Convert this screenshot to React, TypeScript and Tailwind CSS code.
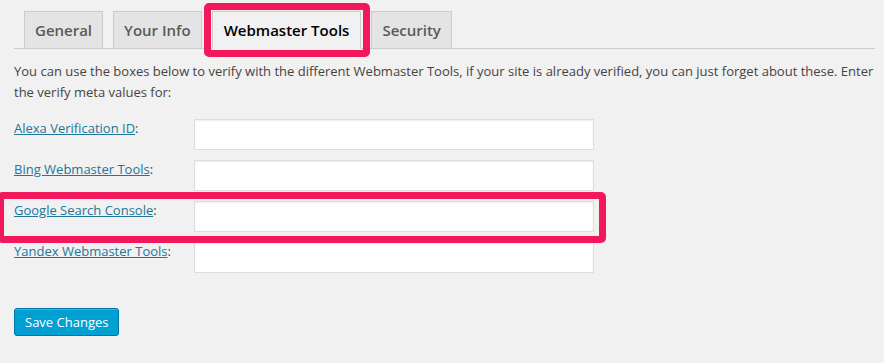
import React from 'react';

const tabs = [
  { label: 'General', active: false },
  { label: 'Your Info', active: false },
  { label: 'Webmaster Tools', active: true },
  { label: 'Security', active: false },
];

const fields = [
  'Alexa Verification ID',
  'Bing Webmaster Tools',
  'Google Search Console',
  'Yandex Webmaster Tools',
];

export default function App() {
  return (
    <div className="relative min-h-[363px] overflow-hidden bg-[#f1f1f1] font-['Open_Sans',sans-serif] text-[13px] text-[#444]">
      <div className="pl-[14px] pr-[9px] pt-[11px]">
        {/* tabs */}
        <div className="flex items-end gap-[10px] border-b border-[#ccc] pl-[10px]">
          {tabs.map((t) =>
            t.active ? (
              <div
                key={t.label}
                className="-mb-px border border-[#ccc] border-b-[#f1f1f1] bg-[#f1f1f1] px-[11px] py-[6px] text-[15px] font-semibold leading-[24px] text-black"
              >
                {t.label}
              </div>
            ) : (
              <div
                key={t.label}
                className="border border-b-0 border-[#ccc] bg-[#e4e4e4] px-[10px] py-[6px] text-[15px] font-semibold leading-[24px] text-[#5a5a5a]"
              >
                {t.label}
              </div>
            )
          )}
        </div>

        <p className="mt-[12px] max-w-[860px] leading-[21px]">
          You can use the boxes below to verify with the different Webmaster Tools, if your site is already verified, you can just forget about these. Enter the verify meta values for:
        </p>

        {/* fields */}
        <div className="mt-[16px] flex flex-col gap-[10px]">
          {fields.map((f) => (
            <div key={f} className="flex items-start">
              <div className="w-[180px] leading-[18px]">
                <a href="#" className="text-[#21759b] underline">
                  {f}
                </a>
                :
              </div>
              <input
                type="text"
                className="h-[31px] w-[400px] border border-[#ddd] bg-white shadow-[inset_0_1px_2px_rgba(0,0,0,0.07)] outline-none"
              />
            </div>
          ))}
        </div>

        <button className="mt-[35px] h-[28px] rounded-[3px] border border-[#0073aa] bg-[#00a0d2] px-[10px] text-[13px] leading-[26px] text-white shadow-[inset_0_1px_0_rgba(120,200,230,0.5)]">
          Save Changes
        </button>
      </div>

      {/* annotation highlights */}
      <div className="pointer-events-none absolute left-[204px] top-[3px] h-[54px] w-[166px] rounded-[5px] border-[7px] border-[#f2185b]" />
      <div className="pointer-events-none absolute left-[-3px] top-[192px] h-[51px] w-[609px] rounded-[5px] border-[7px] border-[#f2185b]" />
    </div>
  );
}
